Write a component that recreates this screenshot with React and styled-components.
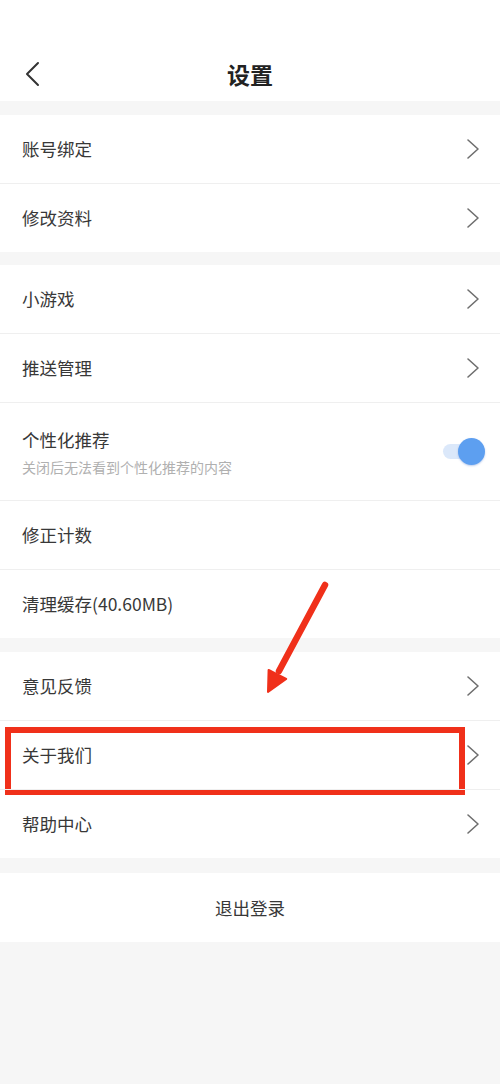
import React from "react";
import styled, { createGlobalStyle } from "styled-components";

const Global = createGlobalStyle`
  html, body { margin: 0; padding: 0; background: #f6f6f6; }
  body { font-family: "Noto Sans CJK SC", "Noto Sans", sans-serif; color: #333; }
  * { box-sizing: border-box; }
`;

const Page = styled.div`
  position: relative;
  width: 500px;
  min-height: 1084px;
  background: #f6f6f6;
  display: flex;
  flex-direction: column;
`;

const Header = styled.header`
  height: 101px;
  padding-top: 46px;
  background: #fff;
  display: grid;
  grid-template-columns: 60px 1fr 60px;
  align-items: center;
`;

const BackBtn = styled.div`
  height: 54px;
  display: flex;
  align-items: center;
  padding-left: 25px;
`;

const Title = styled.h1`
  margin: 0;
  text-align: center;
  font-size: 23px;
  font-weight: 700;
  color: #222;
  line-height: 54px;
`;

const Group = styled.section`
  background: #fff;
  margin-top: ${(p) => p.$gap}px;
  display: flex;
  flex-direction: column;
`;

const Row = styled.div`
  position: relative;
  box-sizing: content-box;
  flex: 0 0 auto;
  height: ${(p) => (p.$tall ? 97 : 68)}px;
  padding: 0 20px 0 22px;
  display: flex;
  align-items: center;
  justify-content: space-between;
  &:not(:first-child) {
    border-top: 1px solid #efefef;
  }
`;

const Texts = styled.div`
  display: flex;
  flex-direction: column;
  gap: 6px;
`;

const Label = styled.span`
  font-size: 17.5px;
  color: #383838;
  line-height: 24px;
`;

const Sub = styled.span`
  font-size: 14px;
  color: #b0b0b0;
  line-height: 18px;
`;

const Centered = styled.div`
  height: 69px;
  display: flex;
  align-items: center;
  justify-content: center;
  font-size: 17.5px;
  color: #383838;
`;

const Switch = styled.div`
  position: relative;
  width: 42px;
  height: 28px;
  margin-right: -5px;
  display: flex;
  align-items: center;
`;

const Track = styled.div`
  width: 38px;
  height: 15px;
  border-radius: 8px;
  background: #dbe8fa;
`;

const Knob = styled.div`
  position: absolute;
  right: 0;
  top: 0;
  width: 27px;
  height: 27px;
  border-radius: 50%;
  background: #5d9ff0;
  box-shadow: 0 1px 2px rgba(60, 110, 200, 0.35);
`;

const Highlight = styled.div`
  position: absolute;
  left: 5px;
  top: 6px;
  width: 460px;
  height: 68px;
  border: 6.5px solid #f0301a;
  pointer-events: none;
`;

const Arrow = styled.svg`
  position: absolute;
  left: 255px;
  top: 575px;
  pointer-events: none;
`;

const Chevron = () => (
  <svg width="14" height="22" viewBox="0 0 14 22">
    <path d="M2 2 L12 11 L2 20" fill="none" stroke="#6f6f6f" strokeWidth="1.6" strokeLinecap="round" strokeLinejoin="round" />
  </svg>
);

const NavRow = ({ label }) => (
  <Row>
    <Label>{label}</Label>
    <Chevron />
  </Row>
);

export default function App() {
  return (
    <>
      <Global />
      <Page>
        <Header>
          <BackBtn>
            <svg width="16" height="26" viewBox="0 0 16 26">
              <path d="M13 2 L2 13 L13 24" fill="none" stroke="#333" strokeWidth="2" strokeLinecap="round" strokeLinejoin="round" />
            </svg>
          </BackBtn>
          <Title>设置</Title>
          <div />
        </Header>

        <Group $gap={14}>
          <NavRow label="账号绑定" />
          <NavRow label="修改资料" />
        </Group>

        <Group $gap={13}>
          <NavRow label="小游戏" />
          <NavRow label="推送管理" />
          <Row $tall>
            <Texts>
              <Label>个性化推荐</Label>
              <Sub>关闭后无法看到个性化推荐的内容</Sub>
            </Texts>
            <Switch>
              <Track />
              <Knob />
            </Switch>
          </Row>
          <Row>
            <Label>修正计数</Label>
          </Row>
          <Row>
            <Label>清理缓存(40.60MB)</Label>
          </Row>
        </Group>

        <Group $gap={14}>
          <NavRow label="意见反馈" />
          <Row>
            <Label>关于我们</Label>
            <Chevron />
            <Highlight />
          </Row>
          <NavRow label="帮助中心" />
        </Group>

        <Group $gap={15}>
          <Centered>退出登录</Centered>
        </Group>

        <Arrow width="80" height="125" viewBox="0 0 80 125">
          <line x1="70" y1="10" x2="24" y2="96" stroke="#f0301a" strokeWidth="6.5" strokeLinecap="round" />
          <polygon points="13,117 13.6,95 31.2,104" fill="#f0301a" stroke="#f0301a" strokeWidth="2" strokeLinejoin="round" />
        </Arrow>
      </Page>
    </>
  );
}
